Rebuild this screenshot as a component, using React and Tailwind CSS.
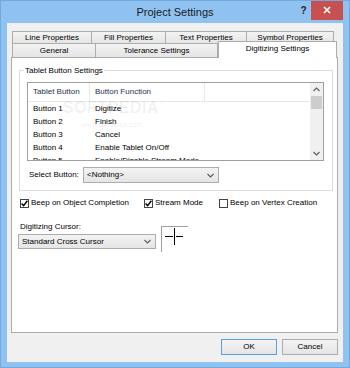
import React from "react";

const Chevron = ({ up }) => (
  <svg width="7" height="5" viewBox="0 0 7 5">
    <polyline
      points={up ? "0.5,4 3.5,1 6.5,4" : "0.5,1 3.5,4 6.5,1"}
      fill="none"
      stroke="#606060"
      strokeWidth="1.2"
    />
  </svg>
);

function Combo({ text, className }) {
  return (
    <div
      className={`flex items-center justify-between border border-[#acacac] bg-linear-to-b from-[#f3f3f3] to-[#e5e5e5] pl-[3px] pr-[4px] ${className}`}
    >
      <span>{text}</span>
      <Chevron />
    </div>
  );
}

function Check({ checked, label, className }) {
  return (
    <div className={`flex items-center gap-[2px] ${className}`}>
      <div className="w-[9px] h-[9px] border border-[#444] bg-white flex items-center justify-center">
        {checked && (
          <svg width="7" height="7" viewBox="0 0 7 7">
            <polyline points="0.6,3.4 2.6,5.6 6.4,0.8" fill="none" stroke="#000" strokeWidth="1.5" />
          </svg>
        )}
      </div>
      <span>{label}</span>
    </div>
  );
}

function Tab({ label, className }) {
  return (
    <div
      className={`h-full flex items-center justify-center border-t border-r border-[#acacac] bg-linear-to-b from-[#f3f3f3] to-[#e5e5e5] ${className}`}
    >
      {label}
    </div>
  );
}

const rows = [
  ["Button 1", "Digitize"],
  ["Button 2", "Finish"],
  ["Button 3", "Cancel"],
  ["Button 4", "Enable Tablet On/Off"],
  ["Button 5", "Enable/Disable Stream Mode"],
];

export default function App() {
  return (
    <div className="w-[350px] h-[368px] flex flex-col bg-[#8fc2f1] border border-[#72a9de] font-['Liberation_Sans',Arial,sans-serif] text-[8px] text-black leading-none whitespace-nowrap overflow-hidden">
      {/* title bar */}
      <div className="h-[22px] flex">
        <div className="w-[53px]" />
        <div className="flex-1 flex items-center justify-center text-[11px] text-[#1a1a1a]">
          Project Settings
        </div>
        <div className="w-[53px] flex items-start">
          <div className="w-[15px] h-[20px] flex items-center justify-center font-bold text-[10px] text-[#222]">
            ?
          </div>
          <div className="w-[32px] h-[20px] -mt-px bg-[#c75050] flex items-center justify-center">
            <svg width="8" height="8" viewBox="0 0 8 8">
              <path d="M1 1L7 7M7 1L1 7" stroke="#fff" strokeWidth="1.6" />
            </svg>
          </div>
          <div className="w-[6px]" />
        </div>
      </div>

      {/* client */}
      <div className="mx-[6px] h-[339px] bg-[#f0f0f0] flex flex-col pl-[4px] pr-[5px] pt-[8px]">
        <div className="ml-[1px] flex h-[12px]">
          <Tab label="Line Properties" className="w-[80px] border-l" />
          <Tab label="Fill Properties" className="w-[74px]" />
          <Tab label="Text Properties" className="w-[81px]" />
          <Tab label="Symbol Properties" className="w-[87px]" />
        </div>
        <div className="ml-[1px] flex h-[14px]">
          <Tab label="General" className="w-[84px] border-l" />
          <Tab label="Tolerance Settings" className="w-[122px]" />
          <div className="relative z-10 w-[119px] h-[17px] -mt-[2px] pb-[2px] bg-white border-l border-t border-r border-[#acacac] flex items-center justify-center">
            Digitizing Settings
          </div>
        </div>

        {/* panel */}
        <div className="w-[327px] h-[276px] bg-white border border-[#acacac] flex flex-col">
          <div className="relative ml-[7px] mt-[12px] w-[314px] h-[121px] border border-[#dcdcdc] pt-[11px] pl-[7px]">
            <span className="absolute left-[4px] -top-[6px] bg-white px-[1px] leading-[11px]">
              Tablet Button Settings
            </span>

            <div className="relative w-[297px] h-[79px] border border-[#a0a0a0] flex overflow-hidden">
              <div className="w-[282px] flex flex-col">
                <div className="h-[19px] shrink-0 flex border-b border-[#e8e8e8] text-[#1e2f4d]">
                  <div className="w-[62px] pl-[5px] flex items-center border-r border-[#e8e8e8]">Tablet Button</div>
                  <div className="w-[115px] pl-[5px] flex items-center border-r border-[#e8e8e8]">Button Function</div>
                </div>
                {rows.map(([a, b]) => (
                  <div key={a} className="h-[13px] flex items-center shrink-0">
                    <div className="w-[62px] pl-[5px]">{a}</div>
                    <div className="pl-[5px]">{b}</div>
                  </div>
                ))}
              </div>
              <div className="w-[13px] bg-[#f0f0f0] flex flex-col items-center">
                <div className="h-[13px] flex items-center justify-center">
                  <Chevron up />
                </div>
                <div className="w-[11px] h-[13px] bg-[#cdcdcd]" />
                <div className="flex-1" />
                <div className="h-[13px] flex items-center justify-center">
                  <Chevron />
                </div>
              </div>
              <div className="absolute left-[35px] top-[17px] font-bold text-[16px] tracking-[0.5px] text-[#000]/[0.06] pointer-events-none">
                SOFTPEDIA<span className="text-[7px] align-top">®</span>
              </div>
              <div className="absolute left-[54px] top-[38px] text-[7px] text-[#000]/[0.1] pointer-events-none">
                www.softpedia.com
              </div>
            </div>

            <div className="flex items-center mt-[6px] h-[16px]">
              <div className="w-[56px] pl-[2px]">Select Button:</div>
              <Combo text="<Nothing>" className="w-[136px] h-full" />
            </div>
          </div>

          <div className="flex items-center mt-[6px] h-[12px] ml-[8px]">
            <Check checked label="Beep on Object Completion" className="w-[124px]" />
            <Check checked label="Stream Mode" className="w-[75px]" />
            <Check label="Beep on Vertex Creation" />
          </div>

          <div className="flex mt-[12px] ml-[6px]">
            <div className="flex flex-col">
              <div className="h-[12px] pl-[2px] flex items-center">Digitizing Cursor:</div>
              <Combo text="Standard Cross Cursor" className="mt-[1px] w-[138px] h-[15px]" />
            </div>
            <div className="ml-[5px] mt-[5px] w-[27px] h-[26px] border-l border-t border-[#a0a0a0]">
              <svg width="26" height="25" viewBox="0 0 26 25" shapeRendering="crispEdges">
                <path d="M3 9.5H11M14 9.5H21M12.5 1V18" stroke="#000" strokeWidth="1" fill="none" />
              </svg>
            </div>
          </div>
        </div>

        <div className="flex justify-end gap-[5px] mt-[6px]">
          <div className="w-[56px] h-[16px] flex items-center justify-center border border-[#5a9fe2] bg-linear-to-b from-[#f3f3f3] to-[#e5e5e5]">
            OK
          </div>
          <div className="w-[56px] h-[16px] flex items-center justify-center border border-[#acacac] bg-linear-to-b from-[#f3f3f3] to-[#e5e5e5]">
            Cancel
          </div>
        </div>
      </div>
    </div>
  );
}
